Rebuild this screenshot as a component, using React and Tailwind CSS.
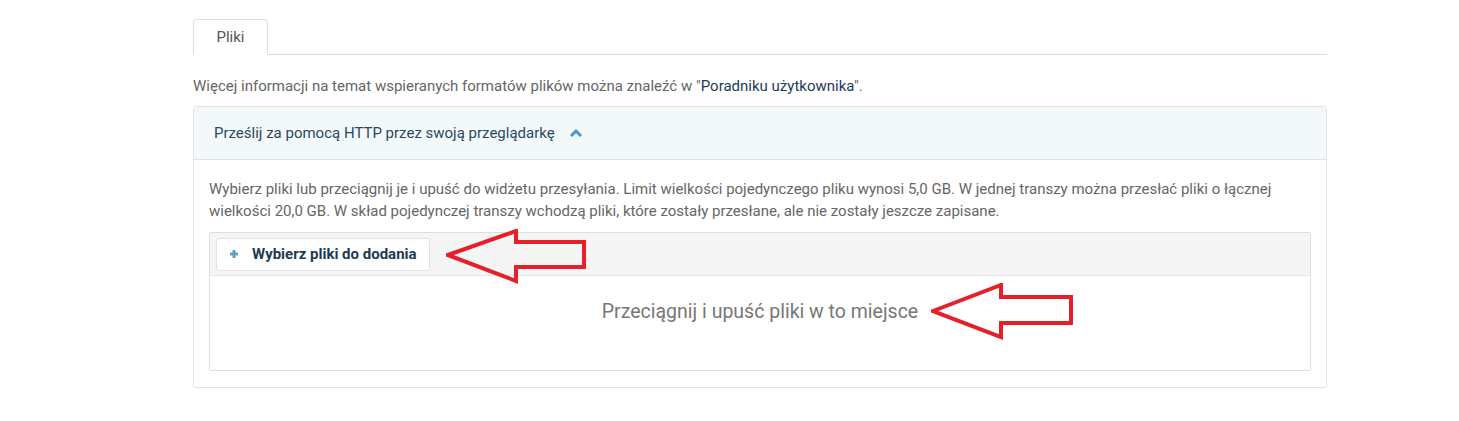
import React from 'react';

const Arrow = ({ className, w, h, points }) => (
  <svg
    className={className}
    width={w}
    height={h}
    viewBox={`0 0 ${w} ${h}`}
    fill="none"
  >
    <polygon
      points={points}
      stroke="#e5202a"
      strokeWidth="4"
      strokeLinejoin="miter"
    />
  </svg>
);

const App = () => {
  return (
    <div
      className="min-h-screen bg-white pl-[193px] pt-[19px]"
      style={{ fontFamily: 'Roboto, "Liberation Sans", sans-serif' }}
    >
      <div className="w-[1134px]">
        {/* tabs */}
        <div className="flex border-b border-[#dddddd]">
          <div className="-mb-px flex h-[36px] w-[75px] items-center justify-center rounded-t-[4px] border border-b-0 border-[#dddddd] bg-white text-[15px] text-[#555555]">
            Pliki
          </div>
        </div>

        <p className="mt-[21px] text-[15px] leading-[20px] text-[#666666]">
          Więcej informacji na temat wspieranych formatów plików można znaleźć w "
          <a href="#" className="text-[#1d3c58]">Poradniku użytkownika</a>".
        </p>

        {/* panel */}
        <div className="mt-[10px] rounded-[3px] border border-[#e3e3e3] bg-white">
          <div className="flex h-[53px] items-center gap-[14px] border-b border-[#dde3e6] bg-[#f3f8fa] pl-[20px] text-[15px] text-[#2a4a60]">
            <span>Prześlij za pomocą HTTP przez swoją przeglądarkę</span>
            <svg width="14" height="10" viewBox="0 0 14 10" fill="none">
              <path d="M2 8 L7 3 L12 8" stroke="#4f94c6" strokeWidth="3" />
            </svg>
          </div>

          <div className="px-[15px] pt-[18px] pb-[16px]">
            <p className="text-[15px] leading-[22px] text-[#666666]">
              Wybierz pliki lub przeciągnij je i upuść do widżetu przesyłania. Limit wielkości pojedynczego pliku wynosi 5,0 GB. W jednej transzy można przesłać pliki o łącznej wielkości 20,0 GB. W skład pojedynczej transzy wchodzą pliki, które zostały przesłane, ale nie zostały jeszcze zapisane.
            </p>

            {/* upload widget */}
            <div className="relative mt-[10px] rounded-[2px] border border-[#dddddd]">
              <div className="flex h-[43px] items-center border-b border-[#e6e6e6] bg-[#f5f5f5] px-[6px]">
                <button className="flex h-[33px] w-[214px] items-center gap-[13px] rounded-[3px] border border-[#e2e2e2] bg-white pl-[12px] text-[15px] font-bold text-[#1e3a50]">
                  <svg width="10" height="10" viewBox="0 0 10 10">
                    <path d="M5 1 V9 M1 5 H9" stroke="#5ea3cb" strokeWidth="3" />
                  </svg>
                  Wybierz pliki do dodania
                </button>
              </div>
              <div className="flex h-[94px] justify-center pt-[23px] text-[19.5px] leading-[26px] text-[#777777]">
                Przeciągnij i upuść pliki w to miejsce
              </div>

              <Arrow
                className="absolute left-[236px] top-[-4px]"
                w={142}
                h={56}
                points="2,26 70,2 70,13 138,13 138,38 70,38 70,52"
              />
              <Arrow
                className="absolute left-[721px] top-[50px]"
                w={144}
                h={57}
                points="2,28 70,2 70,14 140,14 140,40 70,40 70,54"
              />
            </div>
          </div>
        </div>
      </div>
    </div>
  );
};

export default App;
